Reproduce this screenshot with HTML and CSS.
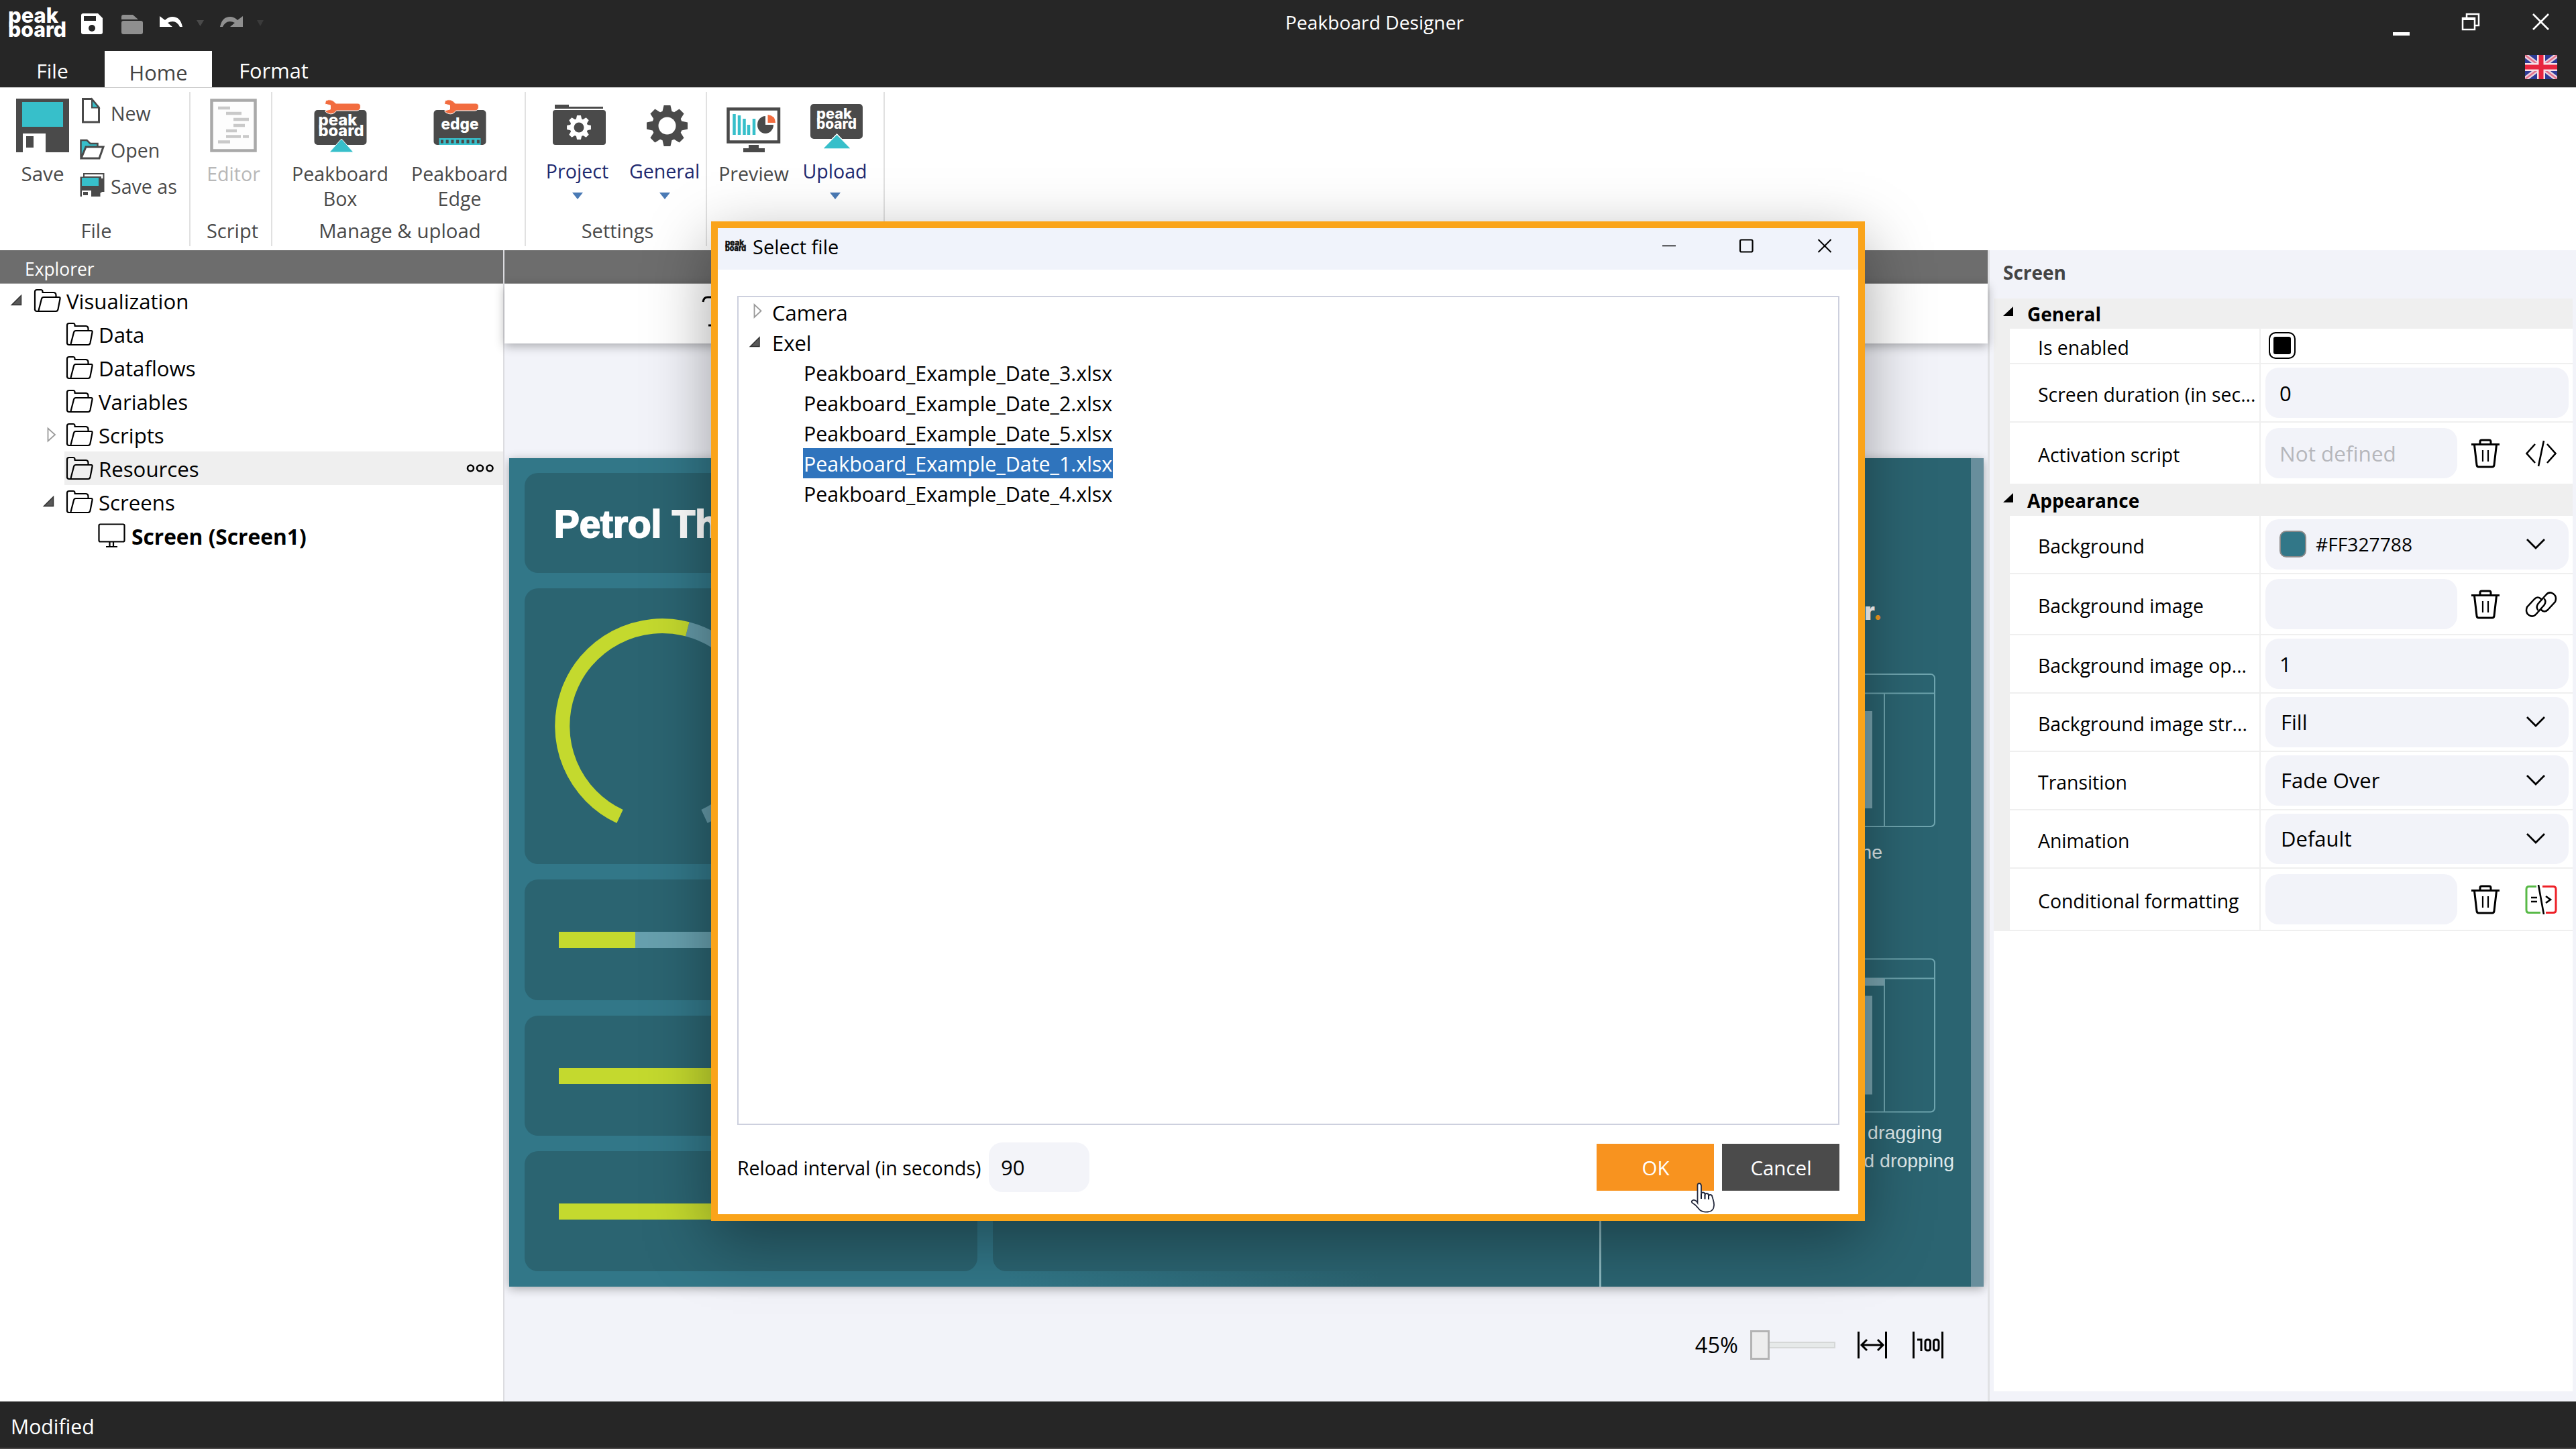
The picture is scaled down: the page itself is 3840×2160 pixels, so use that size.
FILE: index.html
```
<!DOCTYPE html>
<html lang="en">
<head>
<meta charset="utf-8">
<title>Peakboard Designer</title>
<link rel="stylesheet" href="styles.css">
</head>
<body>
<svg class="defs" width="0" height="0">
  <symbol id="folder" viewBox="0 0 42 36"><g fill="none" stroke="#000" stroke-width="2.2" stroke-linejoin="round"><path d="M2 32V5q0-3 3-3h6q2.500 0 2.500 2.500V6h16q4 0 4 4v3"/><path d="M7.500 33L12 15.500q.7-2.500 3-2.500h23q2 0 1.500 2.500L36.500 31q-.7 3-3 3H5q-3 0-3-3"/></g></symbol>
  <symbol id="open" viewBox="0 0 48 50"><path d="M31.500 17.500v14h-14z" fill="#595959" stroke="#333" stroke-width="1.500"/></symbol>
  <symbol id="closed" viewBox="0 0 48 50"><path d="M23.500 15.500v19l10.500-9.500z" fill="#fff" stroke="#999" stroke-width="1.800"/></symbol>
  <symbol id="trash" viewBox="0 0 44 44"><g fill="none" stroke="#000" stroke-width="3" stroke-linejoin="round"><path d="M1 8.500h42M14 8V4.500q0-2.500 2.500-2.500h11q2.500 0 2.500 2.500V8M5.500 9l3.500 30q.4 3 3 3h20q2.600 0 3-3l3.500-30"/><path d="M18 17v17M26 17v17" stroke-width="2.200"/></g></symbol>
  <symbol id="chevron" viewBox="0 0 30 18"><path d="M2 2l13 13L28 2" fill="none" stroke="#000" stroke-width="2.800"/></symbol>
  <symbol id="gear" viewBox="-32 -32 64 64"><circle r="23"/><path id="tooth" d="M-5-31H5L8-18V18L5 31H-5L-8 18V-18z"/><use href="#tooth" transform="rotate(45)"/><use href="#tooth" transform="rotate(90)"/><use href="#tooth" transform="rotate(135)"/></symbol>
</svg>

<header class="titlebar">
  <div class="titlebar-top">
    <svg class="quick" width="420" height="72" viewBox="0 0 420 72">
      <g class="logo" font-size="31" fill="#fff"><text x="12" y="34" textLength="75" lengthAdjust="spacingAndGlyphs">peak</text><text x="12" y="54.500" textLength="87" lengthAdjust="spacingAndGlyphs">board</text></g>
      <path d="M124 20h22l7 7v21q0 3-3 3h-26q-3 0-3-3V23q0-3 3-3z" fill="#fff"/><path d="M125 24h18v7h-18z" fill="#262626"/><circle cx="137" cy="42" r="5" fill="#262626"/>
      <path d="M181 29v-4q0-3 3-3h14l8 7zM184 31h26q3 0 3 3v14q0 3-3 3h-26q-3 0-3-3V34q0-3 3-3z" fill="#8f8f8f"/>
      <path d="M238 24v16h19l-7-6q12-6 18 6h4q-3-15-15-15-6 0-11 5z" fill="#fff"/>
      <path d="M293 30h11l-5.500 9z" fill="#4a4a4a"/>
      <path d="M362 24v16h-19l7-6q-12-6-18 6h-4q3-15 15-15 6 0 11 5z" fill="#8f8f8f"/>
      <path d="M383 30h10l-5 9z" fill="#3a3a3a"/>
    </svg>
    <div class="app-title">Peakboard Designer</div>
    <svg class="window-buttons" width="300" height="72" viewBox="3540 0 300 72">
      <path d="M3567 48h25v5h-25z" fill="#fff"/>
      <path d="M3677 28v-7h18v17h-6M3671 27h18v17h-18z" fill="none" stroke="#fff" stroke-width="2.500"/><path d="M3670 26h20v4h-20z" fill="#fff"/>
      <path d="M3776 21l23 23M3799 21l-23 23" stroke="#fff" stroke-width="2.600"/>
    </svg>
  </div>
  <nav class="tabs">
    <span class="tab tab-file">File</span><span class="tab active">Home</span><span class="tab tab-format">Format</span>
    <svg class="flag" width="48" height="36" viewBox="0 0 48 36"><path d="M0 0h48v36H0z" fill="#2d3b96"/><path d="M0 0l48 36M48 0L0 36" stroke="#e9d3de" stroke-width="7"/><path d="M0 0l48 36M48 0L0 36" stroke="#e5708a" stroke-width="2.500"/><path d="M24 0v36M0 18h48" stroke="#f5e3ea" stroke-width="12"/><path d="M24 0v36M0 18h48" stroke="#e8253f" stroke-width="7"/></svg>
  </nav>
</header>

<section class="ribbon">
  <div class="group g-file">
    <div class="buttons">
      <div class="btn w-save"><svg width="99" height="109" viewBox="14 131 99 109"><path d="M24 147h79v80H24z" fill="#4a4a4a"/><path d="M33 152h61v37H33z" fill="#37bfca"/><path d="M34 199h34v28H34z" fill="#fff"/><path d="M39 203h11v17H39z" fill="#4a4a4a"/></svg><span>Save</span></div>
      <div class="small-list">
        <div class="small"><svg width="46" height="54" viewBox="119 142 46 54"><path d="M123.500 147.500h13l11 13v21.500h-24z" fill="#fff" stroke="#4a4a4a" stroke-width="3"/><path d="M137 148v12.500h10.500z" fill="#37bfca" stroke="#4a4a4a" stroke-width="2"/></svg>New</div>
        <div class="small"><svg width="46" height="54" viewBox="119 197 46 54"><path d="M120.500 235v-26h9l5 5h11v7h-18z" fill="#37bfca" stroke="#4a4a4a" stroke-width="2.500"/><path d="M121 236l7-17h26l-6 17z" fill="#fff" stroke="#4a4a4a" stroke-width="3"/></svg>Open</div>
        <div class="small"><svg width="46" height="54" viewBox="119 251 46 54"><path d="M125 259h29.500v26H150v-21h-25z" fill="#fff" stroke="#4a4a4a" stroke-width="2"/><path d="M119.500 263.500h30v29.500h-30z" fill="#4a4a4a"/><path d="M149 266h5v19l-5 3z" fill="#4a4a4a"/><path d="M122 265h25v12h-25z" fill="#37bfca"/><path d="M122 284h14v9h-14z" fill="#fff"/><path d="M124 286h7v5h-7z" fill="#4a4a4a"/></svg>Save as</div>
      </div>
    </div>
    <div class="group-label">File</div>
  </div>
  <div class="group g-script">
    <div class="buttons"><div class="btn w-editor disabled"><svg width="100" height="109" viewBox="298 131 100 109"><path d="M315.500 149.500h65v75h-65z" fill="#fdfdfd" stroke="#a9a9a9" stroke-width="4.500"/><path d="M325 161h18M337 169h23M348 178h23M348 187h17M337 195h16M337 203.500h22M362 203.500h9M325 211.500h18" stroke="#c9c9c9" stroke-width="4.500"/></svg><span>Editor</span></div></div>
    <div class="group-label">Script</div>
  </div>
  <div class="group g-manage">
    <div class="buttons">
      <div class="btn w-box"><svg width="177" height="109" viewBox="418.500 131 177 109"><rect x="468" y="164" width="78" height="52" rx="5" fill="#4a4a4a"/><path d="M485 150q9-4 15 4h32q5 0 5 5t-5 6h-31q-5 7-12 4-4-1-5-4l8-2v-6l-8-2z" fill="#f26c3f" stroke="#fff" stroke-width="1"/><g class="logo" font-size="23" fill="#fff"><text x="474" y="187" textLength="58" lengthAdjust="spacingAndGlyphs">peak</text><text x="474" y="203" textLength="68" lengthAdjust="spacingAndGlyphs">board</text></g><path d="M508.500 207l18 20h-36z" fill="#37bfca" stroke="#fff" stroke-width="1"/></svg><span>Peakboard<br>Box</span></div>
      <div class="btn w-box"><svg width="177" height="109" viewBox="595.500 131 177 109"><rect x="646" y="164" width="78" height="52" rx="5" fill="#4a4a4a"/><path d="M663 150q9-4 15 4h30q5 0 5 5t-5 6h-29q-5 7-12 4-4-1-5-4l8-2v-6l-8-2z" fill="#f26c3f" stroke="#fff" stroke-width="1"/><g class="logo" font-size="24" fill="#fff"><text x="657" y="193" textLength="56" lengthAdjust="spacingAndGlyphs">edge</text></g><path d="M654 206h62v10h-62z" fill="#37bfca"/><path d="M656.500 211h60" stroke="#4a4a4a" stroke-width="5" stroke-dasharray="4 3.700"/></svg><span class="nudge">Peakboard<br>Edge</span></div>
    </div>
    <div class="group-label">Manage &amp; upload</div>
  </div>
  <div class="group g-settings">
    <div class="buttons">
      <div class="btn w-project drop"><svg width="127" height="105" viewBox="797 131 127 105"><path d="M827 162v-6h21v3h51v3z" fill="#4a4a4a"/><rect x="824" y="164" width="79" height="52" rx="4" fill="#4a4a4a"/><use href="#gear" x="844.500" y="171.500" width="37" height="37" fill="#fff"/><circle cx="863" cy="190" r="7.500" fill="#4a4a4a"/></svg><span>Project</span><i class="caret"></i></div>
      <div class="btn w-general drop"><svg width="127" height="105" viewBox="927 131 127 105"><use href="#gear" x="963" y="156" width="63" height="63" fill="#4a4a4a"/><circle cx="994.500" cy="187.500" r="13" fill="#fff"/></svg><span>General</span><i class="caret"></i></div>
    </div>
    <div class="group-label">Settings</div>
  </div>
  <div class="group g-upload">
    <div class="buttons">
      <div class="btn w-upload"><svg width="121" height="109" viewBox="1063 131 121 109"><path d="M1085.500 162.500h75.500v49h-75.500z" fill="#fff" stroke="#4a4a4a" stroke-width="4.500"/><path d="M1116 216h15v5h9v6h-32v-6h8z" fill="#4a4a4a"/><path d="M1094.500 170v31M1102 172v29M1109.500 177v24M1116 186v15M1124 177v24" stroke="#37bfca" stroke-width="4.500"/><path d="M1141 173v13h12a12 13 0 1 1-12-13z" fill="#4a4a4a"/><path d="M1144.500 171q11 1 11.500 12h-11.500z" fill="#f26c3f"/></svg><span>Preview</span></div>
      <div class="btn w-upload drop"><svg width="121" height="105" viewBox="1184 131 121 105"><rect x="1208" y="155" width="78" height="52" rx="5" fill="#4a4a4a"/><g class="logo" font-size="21" fill="#fff"><text x="1217" y="177" textLength="53" lengthAdjust="spacingAndGlyphs">peak</text><text x="1217" y="192" textLength="60" lengthAdjust="spacingAndGlyphs">board</text></g><path d="M1247.500 200l21.500 22h-43z" fill="#37bfca" stroke="#fff" stroke-width="1.500"/></svg><span>Upload</span><i class="caret"></i></div>
    </div>
  </div>
</section>

<main class="main">
  <aside class="explorer">
    <div class="bar">Explorer</div>
    <div class="row"><svg class="exp"><use href="#open"/></svg><div class="item"><svg class="fold"><use href="#folder"/></svg>Visualization</div></div>
    <div class="row l1"><i class="exp"></i><div class="item"><svg class="fold"><use href="#folder"/></svg>Data</div></div>
    <div class="row l1"><i class="exp"></i><div class="item"><svg class="fold"><use href="#folder"/></svg>Dataflows</div></div>
    <div class="row l1"><i class="exp"></i><div class="item"><svg class="fold"><use href="#folder"/></svg>Variables</div></div>
    <div class="row l1"><svg class="exp"><use href="#closed"/></svg><div class="item"><svg class="fold"><use href="#folder"/></svg>Scripts</div></div>
    <div class="row l1"><i class="exp"></i><div class="item hover"><svg class="fold"><use href="#folder"/></svg>Resources<svg class="more" width="42" height="14" viewBox="0 0 42 14"><g fill="none" stroke="#000" stroke-width="2.600"><circle cx="6.500" cy="7" r="4.500"/><circle cx="20.500" cy="7" r="4.500"/><circle cx="35" cy="7" r="4.500"/></g></svg></div></div>
    <div class="row l1"><svg class="exp"><use href="#open"/></svg><div class="item"><svg class="fold"><use href="#folder"/></svg>Screens</div></div>
    <div class="row l2"><i class="exp"></i><div class="item bold"><svg class="fold" viewBox="0 0 42 36"><g fill="none" stroke="#000" stroke-width="2.200"><rect x="1.500" y="1.500" width="38" height="26" rx="2"/><path d="M17.500 28v7M23 28v7M12 35h17"/></g></svg>Screen (Screen1)</div></div>
  </aside>

  <section class="workspace">
    <div class="bar"></div>
    <div class="toolbar"><svg width="60" height="60" viewBox="1040 430 60 60"><path d="M1048 450q1-7 7-7h10M1056 485h8" fill="none" stroke="#000" stroke-width="3"/></svg></div>
    <div class="stage">
      <div class="board">
        <div class="cards">
          <div class="card heading">Petrol Th</div>
          <div class="card"><svg width="675" height="411" viewBox="782 877 675 411"><g fill="none" stroke-width="22"><path d="M1024.800 937.900A149 149 0 0 1 1050 1217" stroke="#6499a7"/><path d="M924 1217A149 149 0 0 1 1024.800 937.900" stroke="#c4d92e"/></g></svg></div>
          <div class="card meter"><div class="track"><div class="fill" style="width:114px"></div></div></div>
          <div class="card meter"><div class="track"><div class="fill"></div></div></div>
          <div class="card meter"><div class="track"><div class="fill"></div></div></div>
          <div class="card side"></div>
        </div>
        <div class="intro">
          <svg width="551" height="1235" viewBox="2387 683 551 1235">
            <text class="lead" x="2806" y="924" text-anchor="end">r<tspan fill="#f39c1f">.</tspan></text>
            <g fill="none" stroke="#6fa5af" stroke-width="2"><rect x="2600" y="1005" width="284" height="227" rx="6"/><path d="M2600 1033.500h284M2809 1033v199"/><rect x="2600" y="1429.500" width="284" height="228" rx="6"/><path d="M2600 1458.500h284M2809 1458v199"/></g>
            <path d="M2750 1060h41v145h-41zM2750 1458h59v11.500h-59zM2750 1484.500h41v147h-41z" fill="#78a3ae"/>
            <g class="note"><text x="2806" y="1280" text-anchor="end">ne</text><text x="2895" y="1698" text-anchor="end">dragging</text><text x="2913" y="1740" text-anchor="end">d dropping</text></g>
          </svg>
        </div>
        <div class="strip"></div>
      </div>
      <div class="zoom">
        <span>45%</span>
        <div class="slider"><div class="thumb"></div><div class="rail"></div></div>
        <svg width="44" height="42" viewBox="0 0 44 42"><path d="M1.500 1v40M42.500 1v40M7 21h30M14 13l-8 8 8 8M30 13l8 8-8 8" fill="none" stroke="#000" stroke-width="3"/></svg>
        <svg width="46" height="42" viewBox="0 0 46 42"><path d="M1.500 1v40M44.500 1v40M7 13h6v17" fill="none" stroke="#000" stroke-width="3"/><rect x="19" y="13" width="7.500" height="16" rx="3" fill="none" stroke="#000" stroke-width="3"/><rect x="31.500" y="13" width="7.500" height="16" rx="3" fill="none" stroke="#000" stroke-width="3"/></svg>
      </div>
    </div>
  </section>

  <aside class="props">
    <div class="props-title">Screen</div>
    <div class="grid">
      <div class="section"><i class="tri"></i>General</div>
      <div class="prop h-check"><label>Is enabled</label><div class="val"><div class="check"></div></div></div>
      <div class="prop"><label>Screen duration (in sec...</label><div class="val"><div class="input">0</div></div></div>
      <div class="prop h-tall last"><label>Activation script</label><div class="val"><div class="input short muted">Not defined</div><svg class="trash"><use href="#trash"/></svg><svg width="48" height="40" viewBox="0 0 48 40"><path d="M15 6L2.500 20 15 34M33 6l12.500 14L33 34M28 1l-8 38" fill="none" stroke="#000" stroke-width="2.600"/></svg></div></div>
      <div class="section h-app"><i class="tri"></i>Appearance</div>
      <div class="prop"><label>Background</label><div class="val"><div class="input color"><i class="swatch"></i>#FF327788<svg class="chev"><use href="#chevron"/></svg></div></div></div>
      <div class="prop h-tall"><label>Background image</label><div class="val"><div class="input short"></div><svg class="trash"><use href="#trash"/></svg><svg width="48" height="40" viewBox="0 0 48 40"><g fill="none" stroke="#000" stroke-width="2.500" stroke-linecap="round"><path d="M19 28q-3-4 .5-9L31 6q5-6 11-2t3 12L34 28q-5 5-10 0"/><path d="M29 12q3 4-.5 9L17 34q-5 6-11 2T3 24l11-12q5-5 10 0"/></g></svg></div></div>
      <div class="prop"><label>Background image op...</label><div class="val"><div class="input">1</div></div></div>
      <div class="prop"><label>Background image str...</label><div class="val"><div class="input sel">Fill<svg class="chev"><use href="#chevron"/></svg></div></div></div>
      <div class="prop"><label>Transition</label><div class="val"><div class="input sel">Fade Over<svg class="chev"><use href="#chevron"/></svg></div></div></div>
      <div class="prop"><label>Animation</label><div class="val"><div class="input sel">Default<svg class="chev"><use href="#chevron"/></svg></div></div></div>
      <div class="prop h-cond"><label>Conditional formatting</label><div class="val"><div class="input short"></div><svg class="trash"><use href="#trash"/></svg><svg width="48" height="44" viewBox="0 0 48 44"><g fill="none" stroke-width="3"><path d="M17 2.500H6q-4 0-4 4v31q0 4 4 4h17" stroke="#58b947"/><path d="M26 2.500h16q4 0 4 4v31q0 4-4 4H31" stroke="#ee2027"/><path d="M20 0l8 44M9 19h9M9 25h9M31 17l7 5-7 5" stroke="#000" stroke-width="2.600"/></g></svg></div></div>
    </div>
  </aside>
</main>

<footer class="status">Modified</footer>

<div class="dialog">
  <div class="dialog-title">
    <svg width="34" height="20" viewBox="0 0 34 20"><g class="logo" font-size="12" fill="#111" stroke="#111" stroke-width=".5"><text x="1" y="9.500" textLength="28" lengthAdjust="spacingAndGlyphs">peak</text><text x="1" y="17.500" textLength="31" lengthAdjust="spacingAndGlyphs">board</text></g></svg>
    <span>Select file</span>
    <svg class="dialog-buttons" width="300" height="62" viewBox="2470 340 300 62"><g fill="none" stroke="#000"><path d="M2478 366.500h20" stroke-width="1.500"/><rect x="2594" y="357.500" width="18.500" height="18" rx="2" stroke-width="2.200"/><path d="M2710.500 357l19 19M2729.500 357l-19 19" stroke-width="2"/></g></svg>
  </div>
  <div class="files">
    <div class="frow"><svg class="fexp" viewBox="0 0 50 45"><path d="M23.500 11v19l10-9.500z" fill="#fff" stroke="#999" stroke-width="1.800"/></svg>Camera</div>
    <div class="frow"><svg class="fexp" viewBox="0 0 50 45"><path d="M31 15v13.500H17.500z" fill="#595959" stroke="#333" stroke-width="1.500"/></svg>Exel</div>
    <div class="frow file"><span>Peakboard_Example_Date_3.xlsx</span></div>
    <div class="frow file"><span>Peakboard_Example_Date_2.xlsx</span></div>
    <div class="frow file"><span>Peakboard_Example_Date_5.xlsx</span></div>
    <div class="frow file selected"><span>Peakboard_Example_Date_1.xlsx</span></div>
    <div class="frow file"><span>Peakboard_Example_Date_4.xlsx</span></div>
  </div>
  <div class="dialog-foot">
    <label>Reload interval (in seconds)</label>
    <div class="seconds">90</div>
    <div class="action ok">OK</div>
    <div class="action cancel">Cancel</div>
  </div>
  <svg class="cursor" width="38" height="48" viewBox="0 0 38 48"><path d="M10.500 28V4.500Q10.500 1 13 1t3 3.500V17q0-2.500 2.500-2.500T21.500 17v1.500q0-2.500 2.500-2.500t3 2.500v2q0-2.500 2.500-2.500t3 3c1 4 3 8 2.500 13q-.5 9-9 9.500-10 1-14-5Q8 33 2.500 30q-2-3 1.500-4 4-.5 6.500 4z" fill="#fff" stroke="#23283c" stroke-width="1.800"/><path d="M16 17v7M21.500 18v6.500M27 19v6" stroke="#10152c" stroke-width="2"/></svg>
</div>
</body>
</html>
```
FILE: styles.css
```
* { box-sizing: border-box; }
body { margin: 0; width: 3840px; height: 2160px; overflow: hidden; position: relative; display: flex; flex-direction: column; background: #fff; color: #000; font-family: "Open Sans", "Noto Sans", sans-serif; font-size: 29px; white-space: nowrap; }
svg { display: block; flex: none; }
i { display: block; flex: none; font-style: normal; }
.defs { position: absolute; }
.logo { font-family: Inter, sans-serif; font-weight: 800; }

/* Title bar */
.titlebar { height: 131px; background: #262626; border-bottom: 1px solid #ccc; display: flex; flex-direction: column; color: #fff; }
.titlebar-top { height: 76px; display: flex; align-items: flex-start; }
.app-title { margin-left: 1496px; font-size: 28.200px; line-height: 67px; flex: 1; }
.tabs { height: 54px; display: flex; font-size: 30.800px; line-height: 59px; }
.tab { display: block; text-align: center; }
.tab-file { width: 156px; font-size: 30px; line-height: 59px; }
.tab.active { width: 160px; height: 54px; background: #fff; color: #444; line-height: 64px; }
.tab-format { width: 184px; }
.tabs .flag { margin: 6px 28px 0 auto; }

/* Ribbon */
.ribbon { height: 242px; background: #fff; display: flex; color: #4a4a4a; }
.group { margin: 6px 0; height: 230px; border-right: 2px solid #e1e1e1; display: flex; flex-direction: column; }
.buttons { display: flex; height: 186px; margin-top: -6px; }
.group-label { line-height: 40px; margin-top: 7px; text-align: center; }
.g-file { width: 284px; } .g-script { width: 122px; } .g-manage { width: 378px; } .g-settings { width: 270px; } .g-upload { width: 265px; }
.g-file .buttons { padding-left: 14px; } .g-script .buttons { padding-left: 14px; } .g-manage .buttons { padding-left: 12.500px; } .g-settings .buttons { padding-left: 13px; gap: 3px; } .g-upload .buttons { padding-left: 9px; }
.g-file .group-label { padding-left: 5px; } .g-script .group-label { padding-left: 5px; } .g-manage .group-label { padding-left: 4px; font-size: 29.400px; } .g-settings .group-label { padding-left: 5px; }
.btn { display: flex; flex-direction: column; align-items: center; text-align: center; line-height: 37px; font-size: 28.600px; }
.btn .nudge { padding-left: 2px; }
.w-save { width: 99px; font-size: 29.600px; } .w-editor { width: 100px; } .w-box { width: 177px; } .w-project, .w-general { width: 127px; } .w-upload { width: 121px; }
.disabled { color: #b8b8b8; }
.drop { color: #1f2a70; }
.caret { margin-top: 14px; border: 8.500px solid transparent; border-top: 10px solid #4a7ab5; border-bottom: 0; }
.small-list { padding: 11px 0 0 6px; }
.small { height: 54.500px; display: flex; line-height: 54px; font-size: 28.600px; }

/* Main area */
.main { height: 1716px; display: flex; }
.bar { height: 50px; background: #6d6d6d; color: #fff; font-size: 26.400px; line-height: 56px; padding-left: 37px; border-bottom: 1px solid #999; }
.explorer { width: 752px; border-right: 2px solid #dcdce0; background: #fff; }
.row { height: 50px; display: flex; font-size: 31.200px; line-height: 47px; }
.l1 { padding-left: 48px; } .l2 { padding-left: 96px; }
.exp { width: 48px; height: 50px; }
.item { flex: 1; display: flex; align-items: center; padding: 3px 0 0 2px; gap: 7px; }
.item.hover { background: #efefef; }
.item.bold { font-weight: 700; font-size: 31.700px; gap: 8px; }
.fold { width: 42px; height: 36px; margin-top: -3px; }
.more { margin: -3px 13px 0 auto; }

.workspace { width: 2211px; display: flex; flex-direction: column; background: #f2f3f9; }
.toolbar { height: 89px; background: #fff; padding: 7px 0 0 288px; box-shadow: 0 4px 14px rgba(0,0,0,.3); z-index: 1; }
.stage { flex: 1; padding: 171px 6px 0 7px; overflow: hidden; }
.board { height: 1235px; display: flex; background: linear-gradient(90deg, #327788 0 740px, #2b6471 1300px); box-shadow: 0 3px 14px rgba(0,0,0,.32); }
.cards { width: 1625px; padding: 22px 0 23px 23px; display: grid; grid-template-columns: 675px 1fr; grid-template-rows: 149px 411px 180px 179px 179px; gap: 23px; grid-auto-flow: column; }
.card { background: #2b6471; border-radius: 20px; min-width: 0; }
.card.side { grid-column: 2; grid-row: 1 / 6; border-radius: 20px 0 0 20px; }
.heading { font: 700 56.500px/154px "Liberation Sans", Arial, sans-serif; color: #fff; padding-left: 44px; -webkit-text-stroke: 2px #fff; }
.meter { padding: 78px 0 0 51px; }
.track { width: 570px; height: 24px; background: #67a0ae; }
.fill { height: 24px; background: #c4d92e; }
.intro { width: 554px; border-left: 3px solid #8db9c0; background: #2b6471; }
.lead { font: 900 36px Inter, sans-serif; fill: #fff; }
.note { font: 28.500px "Liberation Sans", Arial, sans-serif; fill: #dfe9eb; }
.strip { width: 19px; background: #688e9c; }
.zoom { display: flex; align-items: center; margin: 65px 60px 0 0; justify-content: flex-end; font-size: 32.600px; height: 44px; }
.zoom span { line-height: 44px; }
.slider { display: flex; align-items: center; margin: 0 33px 0 18px; }
.thumb { width: 29px; height: 44px; border: 3px solid #b3b3b3; background: #ededed; }
.rail { width: 98px; height: 10px; border: 2px solid #d5d7d7; border-left: 0; background: #e6e9e9; }
.zoom svg + svg { margin-left: 38px; }

/* Properties */
.props { flex: 1; border-left: 3px solid #e0e1e4; background: #f2f3f9; padding: 0 5px 15px 6px; display: flex; flex-direction: column; }
.props-title { height: 72px; line-height: 66px; padding-left: 14px; font-weight: 700; font-size: 28px; color: #444; }
.grid { flex: 1; background: #fff; }
.section { height: 45px; line-height: 47px; background: #efefef; font-weight: 700; font-size: 28px; display: flex; }
.section.h-app { height: 48px; line-height: 50px; }
.tri { width: 0; height: 0; margin: 12px 21px 0 14px; border-left: 15px solid transparent; border-bottom: 14px solid #000; }
.h-app .tri { margin-top: 14px; }
.prop { height: 87px; display: grid; grid-template-columns: 398px 1fr; border-bottom: 2px solid #efefef; }
.prop.h-check { height: 53px; } .prop.h-tall { height: 91px; } .prop.h-cond { height: 93px; } .prop.last { border-bottom: 0; }
.prop label { border-left: 24px solid #efefef; border-right: 2px solid #efefef; padding: 2px 0 0 42px; font-size: 28.400px; display: flex; align-items: center; margin-bottom: -2px; }
.val { display: flex; align-items: center; padding: 0 6px 0 7px; }
.input { height: 75px; flex: 1; background: #f2f3f9; border-radius: 20px; padding-left: 21px; display: flex; align-items: center; font-size: 31px; }
.input.sel { padding: 0 0 2px 23px; }
.input.short { flex: none; width: 286px; margin-right: 20px; }
.muted { color: #b6b7bc; font-size: 31.500px; }
.input.color { font-size: 28.200px; padding-bottom: 2px; }
.swatch { width: 40px; height: 40px; margin-right: 14px; border-radius: 10px; border: 2px solid #8a8a8a; background: #327788; }
.chev { width: 30px; height: 18px; margin: 0 34px 0 auto; }
.trash { width: 44px; height: 44px; margin-right: 37px; }
.check { width: 40px; height: 40px; margin: -1px 0 0 5px; border: 2.500px solid #000; border-radius: 10px; background: #000; box-shadow: inset 0 0 0 5px #fff; }

.status { height: 71px; background: #262626; color: #fff; border-top: 1px solid #555; border-bottom: 2px solid #484646; font-size: 30.200px; line-height: 73px; padding-left: 16px; }

/* File dialog */
.dialog { position: absolute; left: 1060px; top: 330px; width: 1720px; height: 1490px; border: 10px solid #faa41a; background: #fff; display: flex; flex-direction: column; box-shadow: 0 30px 90px rgba(0,0,0,.36); z-index: 5; }
.dialog-title { height: 62px; background: #f0f3fb; display: flex; align-items: flex-start; font-size: 29px; line-height: 55px; padding-left: 10px; }
.dialog-title > svg:first-child { margin: 16px 8px 0 0; }
.dialog-buttons { margin-left: auto; }
.files { margin: 39px 28px 0 29px; height: 1236px; border: 2px solid #cdd0de; }
.frow { height: 45px; line-height: 47px; font-size: 31px; display: flex; }
.fexp { width: 50px; height: 45px; }
.file { padding-left: 96px; font-size: 30.400px; }
.file span { display: block; width: 462px; height: 45px; padding-left: 1px; }
.file.selected span { background: #2f74bd; color: #fff; }
.dialog-foot { margin: 26px 28px 0 29px; height: 74px; display: flex; align-items: center; font-size: 28.500px; }
.dialog-foot label { width: 375px; padding-top: 2px; }
.seconds { width: 150px; height: 74px; line-height: 75px; border-radius: 20px; background: #f3f4f9; padding-left: 18px; font-size: 31px; margin-right: auto; }
.action { width: 175px; height: 70px; line-height: 72px; color: #fff; text-align: center; font-size: 29.500px; padding-left: 1px; }
.ok { background: #f8931f; margin-right: 12px; }
.cancel { background: #4b4b4b; }
.cursor { position: absolute; left: 1450px; top: 1423px; }
```
